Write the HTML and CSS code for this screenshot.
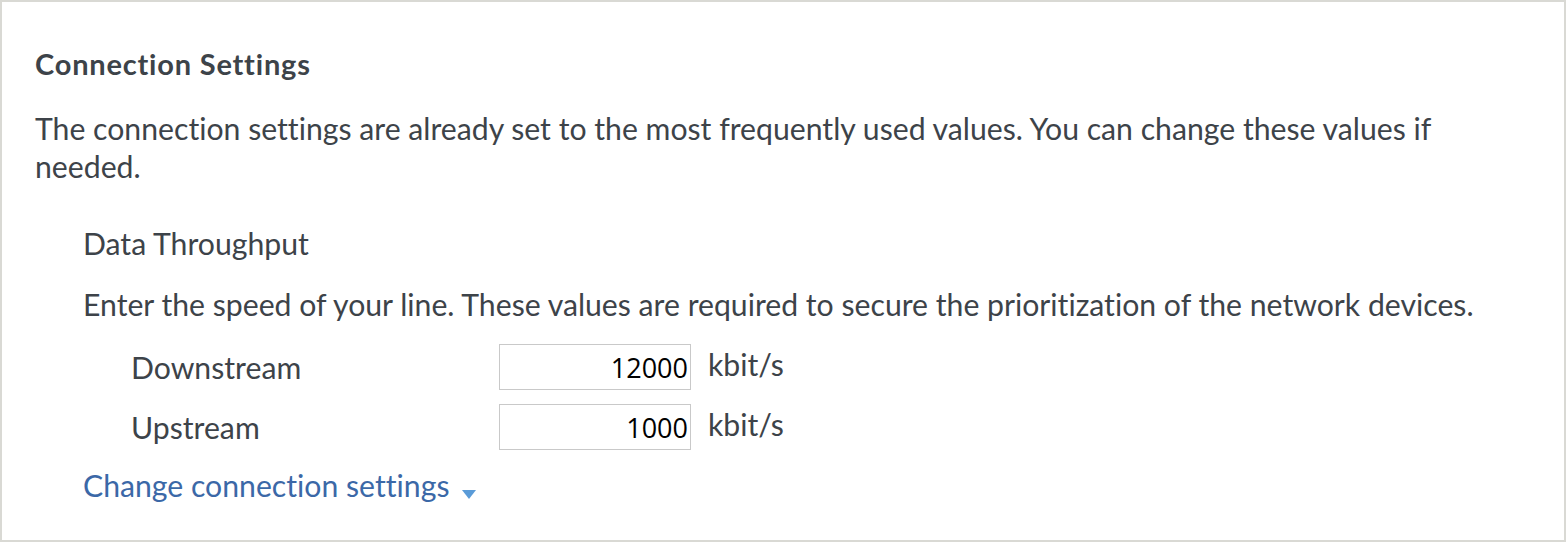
FILE: index.html
```html
<!DOCTYPE html>
<html lang="en">
<head>
<meta charset="utf-8">
<title>Connection Settings</title>
<link rel="stylesheet" href="styles.css">
</head>
<body>
<div class="panel">
  <h2 class="title">Connection Settings</h2>
  <p class="intro">The connection settings are already set to the most frequently used values. You can change these values if needed.</p>
  <div class="section">
    <h3 class="subtitle">Data Throughput</h3>
    <p class="hint">Enter the speed of your line. These values are required to secure the prioritization of the network devices.</p>
    <div class="rows">
      <div class="row">
        <label class="label" for="down">Downstream</label>
        <input class="field" id="down" type="text" value="12000">
        <span class="unit">kbit/s</span>
      </div>
      <div class="row">
        <label class="label" for="up">Upstream</label>
        <input class="field" id="up" type="text" value="1000">
        <span class="unit">kbit/s</span>
      </div>
    </div>
    <a class="toggle" href="#">Change connection settings <span class="caret"></span></a>
  </div>
</div>
</body>
</html>
```

FILE: styles.css
```css
html, body {
  margin: 0;
  padding: 0;
  background: #ffffff;
}

body {
  font-family: "Lato", "Liberation Sans", sans-serif;
  font-variant-ligatures: none;
  color: #3d4349;
}

.panel {
  box-sizing: border-box;
  width: 1566px;
  height: 542px;
  border: 2px solid #d9d9d4;
  padding: 42px 30px 0 33px;
}

.title {
  margin: 0;
  font-size: 29px;
  line-height: 40px;
  font-weight: 700;
  letter-spacing: 0.8px;
}

.intro {
  max-width: 1440px;
  margin: 25px 0 0;
  font-size: 30.2px;
  line-height: 38px;
}

.section {
  padding-left: 48px;
}

.subtitle {
  margin: 39px 0 0;
  font-size: 30.2px;
  line-height: 38px;
  font-weight: 400;
}

.hint {
  margin: 23px 0 0;
  font-size: 30.2px;
  line-height: 38px;
  white-space: nowrap;
}

.rows {
  margin-top: 21px;
  padding-left: 48px;
  display: flex;
  flex-direction: column;
  gap: 14px;
}

.row {
  display: flex;
  align-items: center;
  height: 46px;
}

.label {
  width: 368px;
  font-size: 30.2px;
  line-height: 38px;
}

.field {
  box-sizing: border-box;
  width: 192px;
  height: 46px;
  border: 1px solid #c9c9c9;
  border-radius: 0;
  padding: 0 2px 0 6px;
  text-align: right;
  font-family: "Open Sans", "Noto Sans", sans-serif;
  font-size: 27px;
  color: #000000;
  background: #ffffff;
  outline: none;
}

.unit {
  align-self: flex-start;
  margin: 1px 0 0 17px;
  font-size: 30.2px;
  line-height: 38px;
}

.toggle {
  display: inline-block;
  margin-top: 16px;
  font-size: 30.2px;
  line-height: 38px;
  color: #3b68a7;
  text-decoration: none;
}

.caret {
  display: inline-block;
  width: 0;
  height: 0;
  margin-left: 5px;
  border-left: 7px solid transparent;
  border-right: 7px solid transparent;
  border-top: 9px solid #5a9bd8;
  vertical-align: -2px;
}
```
